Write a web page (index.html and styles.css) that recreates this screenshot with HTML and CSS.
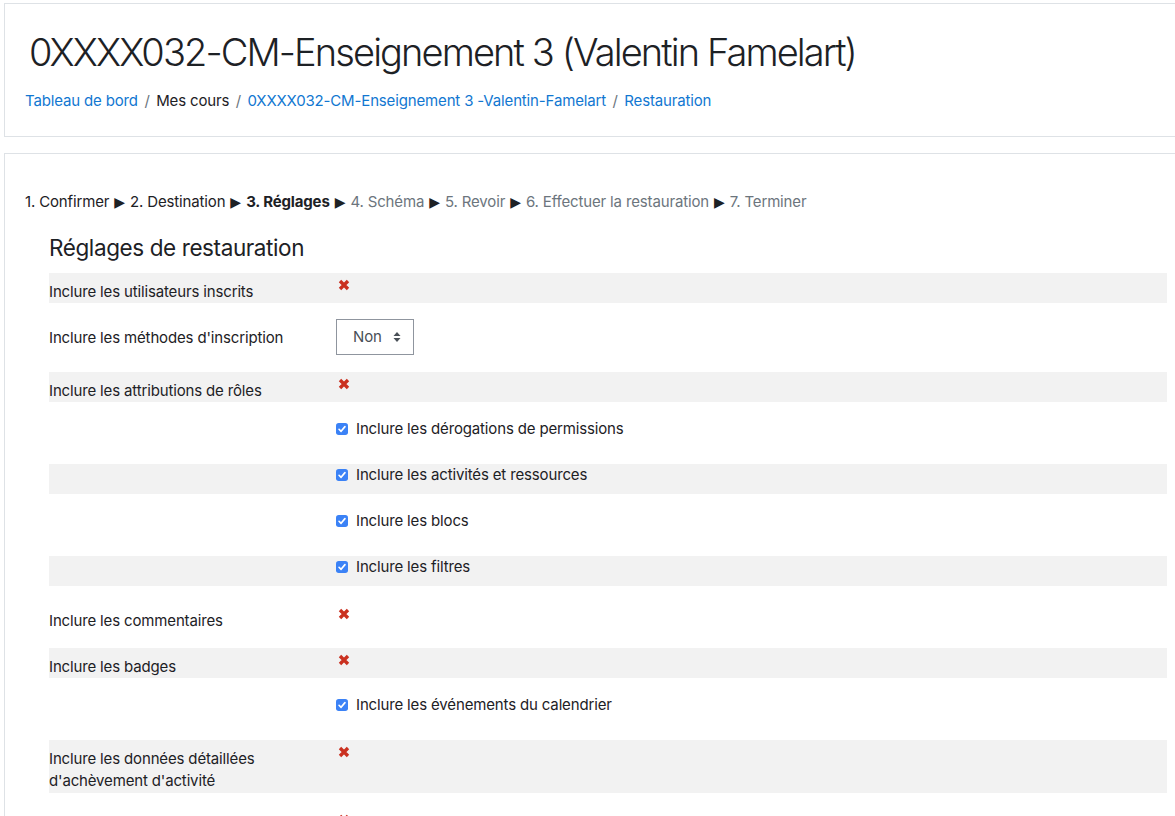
FILE: index.html
```html
<!DOCTYPE html>
<html lang="fr">
<head>
<meta charset="utf-8">
<title>Restauration</title>
<link rel="stylesheet" href="styles.css">
</head>
<body>
<div class="page">
  <header class="card header-card">
    <h1 class="title">0XXXX032-CM-Enseignement 3 (Valentin Famelart)</h1>
    <nav class="breadcrumb">
      <a href="#">Tableau de bord</a><span class="sep">/</span><span>Mes cours</span><span class="sep">/</span><a href="#">0XXXX032-CM-Enseignement 3 -Valentin-Famelart</a><span class="sep">/</span><a href="#">Restauration</a>
    </nav>
  </header>

  <main class="card main-card">
    <div class="steps">
      <span class="done">1. Confirmer</span><span class="arrow">▶</span><span class="done">2. Destination</span><span class="arrow">▶</span><strong class="current">3. Réglages</strong><span class="arrow">▶</span><span class="todo">4. Schéma</span><span class="arrow">▶</span><span class="todo">5. Revoir</span><span class="arrow">▶</span><span class="todo">6. Effectuer la restauration</span><span class="arrow">▶</span><span class="todo">7. Terminer</span>
    </div>

    <section class="form">
      <h2 class="form-title">Réglages de restauration</h2>

      <div class="row odd">
        <div class="label">Inclure les utilisateurs inscrits</div>
        <div class="field"><svg class="no" viewBox="0 0 12 12"><path d="M2 2 L10 10 M10 2 L2 10"/></svg></div>
      </div>

      <div class="row">
        <div class="label">Inclure les méthodes d'inscription</div>
        <div class="field field-select">
          <div class="select"><span>Non</span><svg class="updown" viewBox="0 0 8 12"><path d="M4 1 L7.5 5 L0.5 5 Z M4 11 L7.5 7 L0.5 7 Z"/></svg></div>
        </div>
      </div>

      <div class="row odd">
        <div class="label">Inclure les attributions de rôles</div>
        <div class="field"><svg class="no" viewBox="0 0 12 12"><path d="M2 2 L10 10 M10 2 L2 10"/></svg></div>
      </div>

      <div class="row">
        <div class="label"></div>
        <div class="field check"><svg class="cb" viewBox="0 0 13 13"><rect x="0" y="0" width="13" height="13" rx="3"/><path d="M3.3 6.8 L5.5 9 L9.7 3.9"/></svg><span>Inclure les dérogations de permissions</span></div>
      </div>

      <div class="row odd">
        <div class="label"></div>
        <div class="field check"><svg class="cb" viewBox="0 0 13 13"><rect x="0" y="0" width="13" height="13" rx="3"/><path d="M3.3 6.8 L5.5 9 L9.7 3.9"/></svg><span>Inclure les activités et ressources</span></div>
      </div>

      <div class="row">
        <div class="label"></div>
        <div class="field check"><svg class="cb" viewBox="0 0 13 13"><rect x="0" y="0" width="13" height="13" rx="3"/><path d="M3.3 6.8 L5.5 9 L9.7 3.9"/></svg><span>Inclure les blocs</span></div>
      </div>

      <div class="row odd">
        <div class="label"></div>
        <div class="field check"><svg class="cb" viewBox="0 0 13 13"><rect x="0" y="0" width="13" height="13" rx="3"/><path d="M3.3 6.8 L5.5 9 L9.7 3.9"/></svg><span>Inclure les filtres</span></div>
      </div>

      <div class="row">
        <div class="label">Inclure les commentaires</div>
        <div class="field"><svg class="no" viewBox="0 0 12 12"><path d="M2 2 L10 10 M10 2 L2 10"/></svg></div>
      </div>

      <div class="row odd">
        <div class="label">Inclure les badges</div>
        <div class="field"><svg class="no" viewBox="0 0 12 12"><path d="M2 2 L10 10 M10 2 L2 10"/></svg></div>
      </div>

      <div class="row">
        <div class="label"></div>
        <div class="field check"><svg class="cb" viewBox="0 0 13 13"><rect x="0" y="0" width="13" height="13" rx="3"/><path d="M3.3 6.8 L5.5 9 L9.7 3.9"/></svg><span>Inclure les événements du calendrier</span></div>
      </div>

      <div class="row odd">
        <div class="label">Inclure les données détaillées d'achèvement d'activité</div>
        <div class="field"><svg class="no" viewBox="0 0 12 12"><path d="M2 2 L10 10 M10 2 L2 10"/></svg></div>
      </div>

      <div class="row">
        <div class="label"></div>
        <div class="field"><svg class="no no-last" viewBox="0 0 12 12"><path d="M2 2 L10 10 M10 2 L2 10"/></svg></div>
      </div>
    </section>
  </main>
</div>
</body>
</html>
```

FILE: styles.css
```css
html, body {
  margin: 0;
  padding: 0;
  background: #ffffff;
}

body {
  font-family: Inter, "Liberation Sans", Arial, sans-serif;
  font-size: 15px;
  line-height: 1.5;
  letter-spacing: -0.15px;
  color: #1d2125;
  overflow: hidden;
}

.page {
  padding: 3px 0 0 4px;
}

.card {
  border: 1px solid #dee2e6;
  border-right: none;
  background: #ffffff;
}

.header-card {
  padding: 26px 0 23px 20px;
}

.title {
  margin: 0 0 15px 0;
  padding-left: 4px;
  font-size: 38px;
  font-weight: 300;
  line-height: 45px;
  letter-spacing: -1.9px;
  color: #1d2125;
}

.breadcrumb {
  display: flex;
  align-items: center;
  font-size: 15px;
  line-height: 22.5px;
}

.breadcrumb a {
  color: #1177d1;
  text-decoration: none;
}

.breadcrumb .sep {
  color: #6c757d;
  padding: 0 6.5px;
}

.main-card {
  margin-top: 16px;
  padding: 37px 8px 0 20px;
}

.steps {
  height: 22.5px;
  line-height: 22.5px;
  white-space: nowrap;
}

.steps .arrow {
  font-family: "DejaVu Sans", sans-serif;
  font-size: 14px;
  line-height: 1;
  letter-spacing: 0;
  color: #1d2125;
  padding: 0 5px;
}

.steps .current {
  font-weight: 700;
}

.steps .todo {
  color: #6c757d;
}

.form {
  margin-left: 24px;
}

.form-title {
  margin: 21px 0 12px 0;
  font-size: 22.5px;
  font-weight: 400;
  line-height: 27px;
  letter-spacing: -0.4px;
}

.row {
  display: grid;
  grid-template-columns: 287px 1fr;
  margin-bottom: 16px;
}

.row.odd {
  background: #f2f2f2;
}

.label {
  padding-top: 7.5px;
  padding-right: 15px;
}

.field {
  min-height: 30px;
}

.field-select {
  padding-bottom: 1px;
}

.no {
  display: block;
  width: 12px;
  height: 12px;
  margin: 6px 0 0 2px;
}

.no-last {
  margin-top: 5px;
}

.no path {
  stroke: #ca3120;
  stroke-width: 3.4;
  stroke-linecap: butt;
  fill: none;
}

.select {
  display: flex;
  align-items: center;
  width: 78px;
  height: 36px;
  box-sizing: border-box;
  border: 1px solid #8f959e;
  padding-left: 16px;
  color: #495057;
}

.select span {
  flex: 1;
}

.updown {
  width: 8px;
  height: 12px;
  margin-right: 12px;
}

.updown path {
  fill: #495057;
}

.check {
  display: flex;
  align-items: flex-start;
  line-height: 22.5px;
}

.cb {
  width: 12px;
  height: 12px;
  margin: 5px 8px 0 0;
  flex: none;
}

.cb rect {
  fill: #3b82f6;
}

.cb path {
  stroke: #ffffff;
  stroke-width: 1.8;
  fill: none;
  stroke-linecap: round;
  stroke-linejoin: round;
}
```
